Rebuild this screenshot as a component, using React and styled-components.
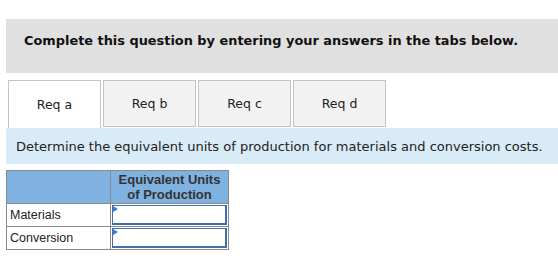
import React from "react";
import styled, { createGlobalStyle } from "styled-components";

const GlobalStyle = createGlobalStyle`
  body {
    margin: 0;
    background: #ffffff;
  }
`;

const Page = styled.div`
  padding: 19px 0 0 6px;
  width: 558px;
  box-sizing: border-box;
`;

const Instruction = styled.div`
  height: 54px;
  box-sizing: border-box;
  background: #e0e0e0;
  padding: 14px 0 0 18px;
  font-family: "DejaVu Sans", Verdana, sans-serif;
  font-weight: bold;
  font-size: 12.9px;
  line-height: 15px;
  color: #111;
`;

const TabRow = styled.div`
  display: flex;
  gap: 2px;
  margin-top: 7px;
  padding-left: 2px;
`;

const Tab = styled.div`
  width: 93px;
  height: ${(p) => (p.$active ? "48px" : "47px")};
  box-sizing: border-box;
  border: 1px solid #c4c4c4;
  border-bottom: ${(p) => (p.$active ? "none" : "1px solid #c4c4c4")};
  background: ${(p) => (p.$active ? "#ffffff" : "#f2f2f2")};
  display: flex;
  align-items: center;
  justify-content: center;
  padding-bottom: 1px;
  font-family: "DejaVu Sans", Verdana, sans-serif;
  font-size: 12.5px;
  color: #222;
`;

const Panel = styled.div`
  height: 36px;
  background: #d9ebf7;
  padding-left: 10px;
  display: flex;
  align-items: center;
  font-family: "DejaVu Sans", Verdana, sans-serif;
  font-size: 13px;
  color: #222;
`;

const Table = styled.table`
  margin-top: 6px;
  border-collapse: collapse;
  font-family: "Liberation Sans", Arial, sans-serif;
  font-size: 12.5px;
  color: #222;
`;

const HeadCell = styled.th`
  background: #7fb1e1;
  border: 1px solid #8a8a8a;
  height: 32px;
  padding: 0;
  font-size: 13px;
  font-weight: bold;
  color: #333;
  line-height: 15px;
  width: ${(p) => p.$w}px;
`;

const LabelCell = styled.td`
  border: 1px solid #8a8a8a;
  height: 22px;
  padding: 0 0 0 3px;
`;

const InputCell = styled.td`
  border: 1px solid #8a8a8a;
  padding: 1px;
  height: 20px;
`;

const InputBox = styled.div`
  position: relative;
  height: 20px;
  box-sizing: border-box;
  border-style: solid;
  border-width: 1px 2px 2px 1px;
  border-color: #3d6fa8;
  background: #fff;

  &::before {
    content: "";
    position: absolute;
    left: 0;
    top: 0;
    border-top: 3px solid transparent;
    border-bottom: 3px solid transparent;
    border-left: 5px solid #3a7bd5;
  }
`;

const tabs = ["Req a", "Req b", "Req c", "Req d"];

export default function App() {
  return (
    <Page>
      <GlobalStyle />
      <Instruction>
        Complete this question by entering your answers in the tabs below.
      </Instruction>
      <TabRow>
        {tabs.map((t, i) => (
          <Tab key={t} $active={i === 0}>
            {t}
          </Tab>
        ))}
      </TabRow>
      <Panel>
        Determine the equivalent units of production for materials and
        conversion costs.
      </Panel>
      <Table>
        <thead>
          <tr>
            <HeadCell $w={103}></HeadCell>
            <HeadCell $w={117}>
              Equivalent Units
              <br />
              of Production
            </HeadCell>
          </tr>
        </thead>
        <tbody>
          <tr>
            <LabelCell>Materials</LabelCell>
            <InputCell>
              <InputBox />
            </InputCell>
          </tr>
          <tr>
            <LabelCell>Conversion</LabelCell>
            <InputCell>
              <InputBox />
            </InputCell>
          </tr>
        </tbody>
      </Table>
    </Page>
  );
}
